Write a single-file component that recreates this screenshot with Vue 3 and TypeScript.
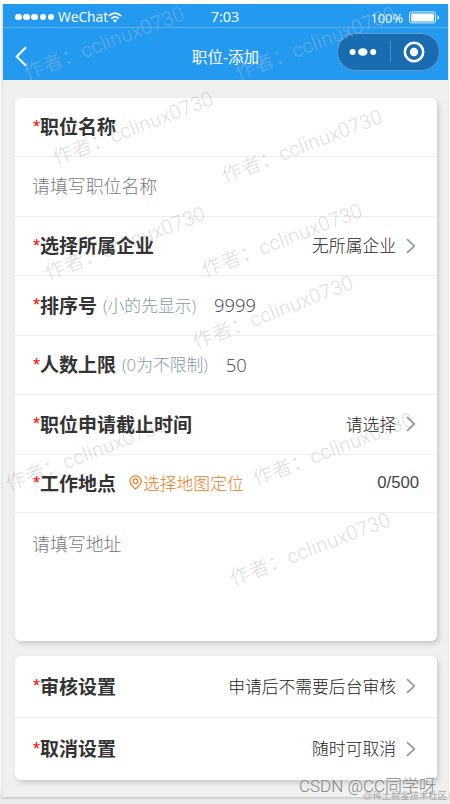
<script setup lang="ts">
interface Row {
  kind: 'head' | 'input' | 'area'
  height: number
  label?: string
  hint?: string
  amount?: string
  value?: string
  locate?: boolean
  count?: string
  text?: string
}

const cards: Row[][] = [
  [
    { kind: 'head', height: 59, label: '职位名称' },
    { kind: 'input', height: 60, text: '请填写职位名称' },
    { kind: 'head', height: 59, label: '选择所属企业', value: '无所属企业' },
    { kind: 'head', height: 60, label: '排序号', hint: '(小的先显示)', amount: '9999' },
    { kind: 'head', height: 59, label: '人数上限', hint: '(0为不限制)', amount: '50' },
    { kind: 'head', height: 60, label: '职位申请截止时间', value: '请选择' },
    { kind: 'head', height: 58, label: '工作地点', locate: true, count: '0/500' },
    { kind: 'area', height: 128, text: '请填写地址' },
  ],
  [
    { kind: 'head', height: 62, label: '审核设置', value: '申请后不需要后台审核' },
    { kind: 'head', height: 62, label: '取消设置', value: '随时可取消' },
  ],
]

const marks = [
  { x: 27, y: 80, light: true },
  { x: 238, y: 80, light: true },
  { x: 56, y: 165 },
  { x: 225, y: 183 },
  { x: 48, y: 280 },
  { x: 205, y: 277 },
  { x: 196, y: 349 },
  { x: 9, y: 491 },
  { x: 256, y: 486 },
  { x: 233, y: 586 },
]
</script>

<template>
  <div class="page">
    <div class="phone">
      <header class="top">
        <div class="status">
          <div class="carrier">
            <i v-for="n in 5" :key="n" class="dot"></i>
            <span class="name">WeChat</span>
            <svg width="14" height="11" viewBox="0 0 14 11" fill="none" stroke="#fff" stroke-width="1.7">
              <path d="M.8 4Q7-1.8 13.2 4M3.2 6.6Q7 3 10.8 6.6" />
              <path d="M4.9 8.3Q7 6.6 9.1 8.3L7 10.7Z" fill="#fff" stroke="none" />
            </svg>
          </div>
          <span class="clock">7:03</span>
          <div class="power">
            <span>100%</span>
            <svg width="31" height="13" viewBox="0 0 31 13">
              <rect x=".6" y=".9" width="26" height="11" rx="2" fill="none" stroke="#fff" stroke-opacity=".85" />
              <rect x="2.2" y="2.4" width="22.8" height="8" rx="1" fill="#fff" />
              <path d="M28.6 4q3 2.5 0 5z" fill="#fff" />
            </svg>
          </div>
        </div>
        <div class="nav">
          <svg class="back" width="12" height="21" viewBox="0 0 12 21" fill="none" stroke="#fff" stroke-width="2">
            <path d="M11 1.2L1.8 10.5L11 19.8" />
          </svg>
          <h1>职位-添加</h1>
          <div class="capsule">
            <svg width="28" height="10" viewBox="0 0 28 10" fill="#fff">
              <circle cx="3.6" cy="5" r="3" />
              <ellipse cx="13.8" cy="5" rx="4.7" ry="3.8" />
              <circle cx="24.2" cy="5" r="3" />
            </svg>
            <i class="split"></i>
            <svg width="22" height="22" viewBox="0 0 22 22">
              <circle cx="11" cy="11" r="9.2" fill="none" stroke="#fff" stroke-width="2.5" />
              <circle cx="11" cy="11" r="4.2" fill="#fff" />
            </svg>
          </div>
        </div>
      </header>

      <main class="form">
        <section v-for="(rows, c) in cards" :key="c" class="card">
          <div v-for="(row, r) in rows" :key="r" :class="['row', row.kind]" :style="{ height: row.height + 'px' }">
            <template v-if="row.kind === 'head'">
              <span class="star">*</span>
              <span class="label">{{ row.label }}</span>
              <span v-if="row.hint" class="hint">{{ row.hint }}</span>
              <span v-if="row.amount" class="amount">{{ row.amount }}</span>
              <span v-if="row.locate" class="locate">
                <svg width="13" height="15" viewBox="0 0 13 15" fill="none" stroke="#ec7a1c" stroke-width="1.2">
                  <path d="M6.5 14Q.8 9.3.8 6.2a5.7 5.4 0 0 1 11.4 0Q12.2 9.3 6.5 14Z" />
                  <circle cx="6.5" cy="6.2" r="2.3" />
                </svg>选择地图定位
              </span>
              <span v-if="row.count" class="count">{{ row.count }}</span>
              <span v-if="row.value" class="value">{{ row.value }}</span>
              <svg v-if="row.value" class="arrow" width="10" height="16" viewBox="0 0 10 16" fill="none" stroke="#8799a3" stroke-width="1.7">
                <path d="M1 1.2L8.3 8L1 14.8" />
              </svg>
            </template>
            <span v-else class="placeholder">{{ row.text }}</span>
          </div>
        </section>
      </main>
    </div>

    <svg class="marks" width="450" height="804" viewBox="0 0 450 804">
      <text
        v-for="(m, i) in marks"
        :key="i"
        :class="{ light: m.light }"
        :transform="`translate(${m.x} ${m.y}) rotate(-21)`"
        textLength="170"
      >作者：cclinux0730</text>
    </svg>
    <div class="credit">CSDN @CC同学呀</div>
    <div class="community">@稀土掘金技术社区</div>
  </div>
</template>

<style>
body {
  background: #fff;
}
</style>

<style scoped>
.page {
  position: relative;
  box-sizing: border-box;
  width: 450px;
  height: 804px;
  padding: 4px 2px 0 2px;
  overflow: hidden;
  background: linear-gradient(#fff 0 790px, #ececec 797px);
  font-family: "Open Sans", "Noto Sans CJK SC", sans-serif;
}
.phone {
  box-sizing: border-box;
  height: 793px;
  border-left: 1px solid #dfe6ec;
  background: #f0f0f0;
  box-shadow: 0 1px 3px rgba(0, 0, 0, 0.2);
}
.top {
  height: 76px;
  background: #2499f0;
  color: #fff;
}
.status {
  box-sizing: border-box;
  display: grid;
  grid-template-columns: 1fr auto 1fr;
  align-items: center;
  height: 24px;
  padding: 3px 8px 0 12px;
  border-bottom: 1px solid #5cb2f3;
}
.carrier {
  display: flex;
  align-items: center;
  gap: 1.6px;
}
.dot {
  width: 6.6px;
  height: 6.6px;
  border-radius: 50%;
  background: #fff;
}
.name {
  margin-left: 2px;
  margin-right: -2px;
  font-size: 13.8px;
  line-height: 18px;
}
.clock {
  margin-right: 5px;
  font-size: 14.5px;
  line-height: 18px;
}
.power {
  display: flex;
  align-items: center;
  justify-content: flex-end;
  gap: 6px;
  font-size: 12.8px;
  line-height: 18px;
}
.power span {
  padding-top: 2px;
}
.nav {
  display: grid;
  grid-template-columns: 1fr auto 1fr;
  align-items: center;
  height: 52px;
  padding: 0 8px 0 12px;
}
.back {
  margin-top: 5px;
}
h1 {
  margin: 5px 4px 0 0;
  font-size: 15.6px;
  font-weight: 400;
  line-height: 22px;
}
.capsule {
  box-sizing: border-box;
  display: flex;
  align-items: center;
  justify-self: end;
  width: 103px;
  height: 38px;
  padding: 0 14px 0 11px;
  justify-content: space-between;
  margin-bottom: 5px;
  border: 1px solid #5c9ccd;
  border-radius: 19px;
  background: #1a6cb0;
}
.split {
  width: 1px;
  height: 21px;
  background: #4b8fc7;
}
.form {
  display: flex;
  flex-direction: column;
  gap: 15px;
  padding: 18px 11px 0 12px;
}
.card {
  border-radius: 6px;
  background: #fff;
  box-shadow: 2px 3px 5px rgba(26, 40, 40, 0.18);
}
.row {
  box-sizing: border-box;
  display: flex;
  align-items: center;
  padding: 0 18px 1px;
  border-bottom: 1px solid #eee;
  white-space: nowrap;
}
.row:last-child {
  border-bottom: 0;
}
.star {
  width: 7px;
  color: #f00;
  font: 18px/24px "Liberation Sans", sans-serif;
}
.label {
  padding-top: 1px;
  color: #333;
  font-size: 19px;
  font-weight: 700;
  line-height: 28px;
}
.hint {
  margin-left: 6px;
  padding-bottom: 1px;
  color: #8799a3;
  font-size: 16.8px;
  font-weight: 300;
}
.amount {
  margin-left: 18px;
  padding-bottom: 1px;
  color: #444;
  font-size: 18.4px;
  font-weight: 300;
}
.locate {
  display: flex;
  align-items: center;
  margin-left: 13px;
  gap: 1px;
  padding-bottom: 1px;
  color: #ec7a1c;
  font-size: 16.8px;
  font-weight: 300;
}
.count {
  margin-left: auto;
  color: #444;
  font: 16.7px/24px "Liberation Sans", sans-serif;
}
.value {
  margin-left: auto;
  padding-bottom: 1px;
  color: #222;
  font-size: 16.8px;
  font-weight: 300;
}
.arrow {
  margin-left: 10px;
  margin-right: 3px;
}
.placeholder {
  margin-left: -1px;
  padding-bottom: 2px;
  color: #777;
  font-size: 17.9px;
  font-weight: 300;
}
.area {
  align-items: flex-start;
  padding-top: 17px;
}
.marks {
  position: absolute;
  inset: 0;
  pointer-events: none;
}
.marks text {
  fill: rgba(120, 120, 120, 0.27);
  font: 300 20px Roboto, "Noto Sans CJK SC", sans-serif;
}
.marks text.light {
  fill: rgba(190, 200, 210, 0.42);
}
.credit {
  position: absolute;
  top: 775px;
  left: 299px;
  color: #858585;
  font: 300 17px/22px Roboto, "Noto Sans CJK SC", sans-serif;
  white-space: nowrap;
}
.community {
  position: absolute;
  top: 789px;
  left: 363px;
  color: #aaa;
  font: 9.3px/14px "Liberation Sans", "Noto Sans CJK SC", sans-serif;
  white-space: nowrap;
}
</style>
